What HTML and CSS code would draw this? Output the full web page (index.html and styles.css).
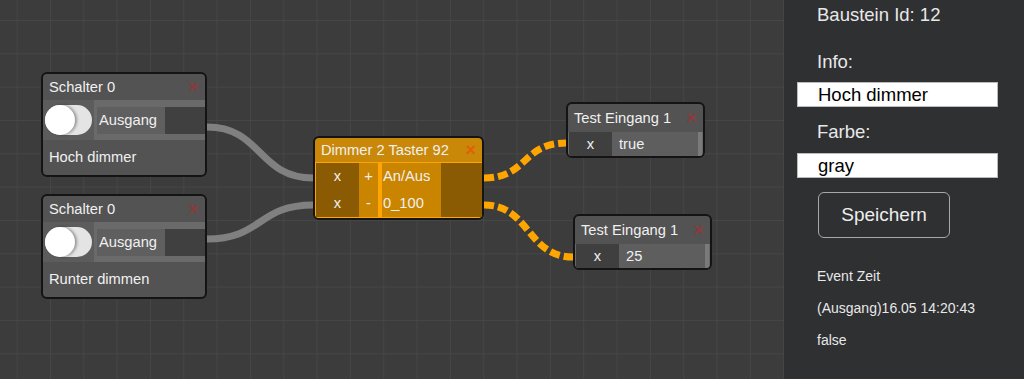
FILE: index.html
```html
<!DOCTYPE html>
<html lang="de">
<head>
    <meta charset="UTF-8">
    <title>Baustein Editor</title>
    <link rel="stylesheet" href="styles.css">
</head>
<body>
    <div class="canvas">
        <svg class="wires" width="784" height="379">
            <path class="wire" d="M207,127 C262,127 258,178 313,178"/>
            <path class="wire" d="M207,239 C262,239 258,205 313,205"/>
            <path class="wire live" d="M484,178 C528,178 522,143 566,143"/>
            <path class="wire live" d="M484,205 C530,205 527,257 573,257"/>
        </svg>

        <!-- Schalter nodes -->
        <div class="node switch-node" style="left:41px; top:72px;">
            <div class="node-head"><span>Schalter 0</span><span class="close">&times;</span></div>
            <div class="band">
                <div class="toggle-cell"><div class="toggle"><div class="knob"></div></div></div>
                <div class="port-box"><span class="port-label">Ausgang</span><span class="port-slot"></span></div>
            </div>
            <div class="node-info">Hoch dimmer</div>
        </div>

        <div class="node switch-node" style="left:41px; top:194px;">
            <div class="node-head"><span>Schalter 0</span><span class="close">&times;</span></div>
            <div class="band">
                <div class="toggle-cell"><div class="toggle"><div class="knob"></div></div></div>
                <div class="port-box"><span class="port-label">Ausgang</span><span class="port-slot"></span></div>
            </div>
            <div class="node-info">Runter dimmen</div>
        </div>

        <!-- Dimmer node (selected) -->
        <div class="node dimmer-node" style="left:313px; top:136px;">
            <div class="node-head"><span>Dimmer 2 Taster 92</span><span class="close">&times;</span></div>
            <div class="dimmer-body">
                <div class="dim-col">
                    <div class="dim-row"><span class="dim-x">x</span><span class="dim-sign">+</span></div>
                    <div class="dim-row"><span class="dim-x">x</span><span class="dim-sign">-</span></div>
                </div>
                <div class="dim-col">
                    <div class="dim-row"><span class="dim-label">An/Aus</span><span class="dim-out"></span></div>
                    <div class="dim-row"><span class="dim-label">0_100</span><span class="dim-out"></span></div>
                </div>
            </div>
        </div>

        <!-- Test inputs -->
        <div class="node test-node" style="left:566px; top:102px;">
            <div class="node-head"><span>Test Eingang 1</span><span class="close">&times;</span></div>
            <div class="test-row"><span class="test-x">x</span><span class="test-val">true</span><span class="test-end"></span></div>
        </div>

        <div class="node test-node" style="left:573px; top:214px;">
            <div class="node-head"><span>Test Eingang 1</span><span class="close">&times;</span></div>
            <div class="test-row"><span class="test-x">x</span><span class="test-val">25</span><span class="test-end"></span></div>
        </div>
    </div>

    <div class="sidebar">
        <div class="title">Baustein Id: 12</div>
        <div class="label info-label">Info:</div>
        <input class="field" type="text" value="Hoch dimmer">
        <div class="label farbe-label">Farbe:</div>
        <input class="field" type="text" value="gray">
        <button class="save-btn" type="button">Speichern</button>
        <div class="event first">Event Zeit</div>
        <div class="event">(Ausgang)16.05 14:20:43</div>
        <div class="event">false</div>
    </div>
</body>
</html>
```

FILE: styles.css
```css
body {
    margin: 0;
    display: flex;
    height: 379px;
    overflow: hidden;
    font-family: "Liberation Sans", Arial, sans-serif;
    background-color: #2f3032;
}

/* Node canvas with grid */
.canvas {
    position: relative;
    width: 784px;
    height: 379px;
    flex-shrink: 0;
    background-color: #3c3c3c;
    background-image:
        linear-gradient(to right, #464646 1px, transparent 1px),
        linear-gradient(to bottom, #464646 1px, transparent 1px);
    background-size: 33.33px 33.33px;
    background-position: 16.67px 20px;
}

.wires {
    position: absolute;
    left: 0;
    top: 0;
}

.wire {
    fill: none;
    stroke: #808080;
    stroke-width: 7;
}

.wire.live {
    stroke: #ffa500;
    stroke-dasharray: 10 4;
}

.node {
    position: absolute;
    box-sizing: border-box;
    border: 2px solid #141414;
    border-radius: 6px;
    background: #535353;
    color: #f0f0f0;
    font-size: 14.7px;
    overflow: hidden;
    display: flex;
    flex-direction: column;
}

.node-head {
    display: flex;
    justify-content: space-between;
    align-items: center;
    padding: 0 6px 0 6px;
    height: 26px;
}

.close {
    color: #8a3b3b;
    font-size: 18px;
    font-weight: bold;
}

/* Schalter */
.switch-node {
    width: 166px;
    height: 105px;
}

.band {
    display: flex;
    align-items: center;
    height: 40px;
    background: #6a6a6a;
}

.toggle-cell {
    width: 52px;
    height: 40px;
    background: #5c5c5c;
    display: flex;
    align-items: center;
    padding-left: 2px;
    box-sizing: border-box;
}

.toggle {
    width: 47px;
    height: 30px;
    border-radius: 15px;
    background: #e4e4e4;
    display: flex;
    align-items: center;
}

.knob {
    width: 30px;
    height: 30px;
    border-radius: 50%;
    background: #ffffff;
    box-shadow: 2px 0 3px rgba(0, 0, 0, 0.35);
}

.port-box {
    display: flex;
    height: 27px;
    margin-left: 3px;
    margin-top: 1px;
}

.port-label {
    width: 68px;
    background: #5f5f5f;
    line-height: 27px;
    padding-left: 2px;
    box-sizing: border-box;
}

.port-slot {
    width: 40px;
    background: #404040;
}

.node-info {
    padding-left: 6px;
    line-height: 35px;
}

/* Dimmer */
.dimmer-node {
    width: 171px;
    height: 84px;
    background: #c98808;
}

.dimmer-node .node-head {
    height: 25px;
}

.dimmer-node .close {
    color: #e0600a;
}

.dimmer-body {
    display: flex;
    gap: 4px;
    padding: 1px;
    flex: 1;
    background: #ffa400;
}

.dim-col {
    display: flex;
    flex-direction: column;
}

.dim-row {
    display: flex;
    height: 27px;
}

.dim-x {
    width: 43px;
    background: #8b5b03;
    text-align: center;
    line-height: 27px;
}

.dim-sign {
    width: 19px;
    background: #c98400;
    text-align: center;
    line-height: 27px;
}

.dim-label {
    width: 58px;
    background: #c98400;
    line-height: 27px;
    padding-left: 1px;
}

.dim-out {
    width: 41px;
    background: #8b5b03;
}

/* Test Eingang */
.test-node {
    width: 139px;
    height: 56px;
}

.test-node .node-head {
    height: 28px;
}

.test-row {
    display: flex;
    height: 24px;
    padding: 0 1px;
    background: #6a6a6a;
}

.test-x {
    width: 43px;
    background: #3f3f3f;
    text-align: center;
    line-height: 24px;
}

.test-val {
    flex: 1;
    background: #5e5e5e;
    line-height: 24px;
    padding-left: 7px;
}

.test-end {
    width: 4px;
    background: #7a7a7a;
}

/* Sidebar */
.sidebar {
    flex: 1;
    display: flex;
    flex-direction: column;
    padding-left: 13px;
    color: #e8e8e8;
}

.title {
    font-size: 18.5px;
    line-height: 22px;
    margin-top: 4px;
    padding-left: 20px;
}

.label {
    font-size: 18.5px;
    line-height: 22px;
    padding-left: 20px;
}

.info-label {
    margin-top: 25px;
}

.farbe-label {
    margin-top: 14px;
}

.field {
    box-sizing: border-box;
    width: 201px;
    height: 25px;
    margin: 9px 0 0 0;
    border: 1px solid #bbb;
    padding: 0 0 0 20px;
    font-family: "Liberation Sans", Arial, sans-serif;
    font-size: 18.5px;
    color: #000;
    background: #fff;
}

.farbe-label + .field {
    margin-top: 10px;
}

.save-btn {
    box-sizing: border-box;
    width: 132px;
    height: 46px;
    margin: 14px 0 0 21px;
    border: 1px solid #a8a8a8;
    border-radius: 6px;
    background: transparent;
    color: #eee;
    font-family: "Liberation Sans", Arial, sans-serif;
    font-size: 19px;
}

.event {
    font-size: 14px;
    line-height: 16px;
    margin-top: 16px;
    padding-left: 20px;
}

.event.first {
    margin-top: 30px;
}
```
